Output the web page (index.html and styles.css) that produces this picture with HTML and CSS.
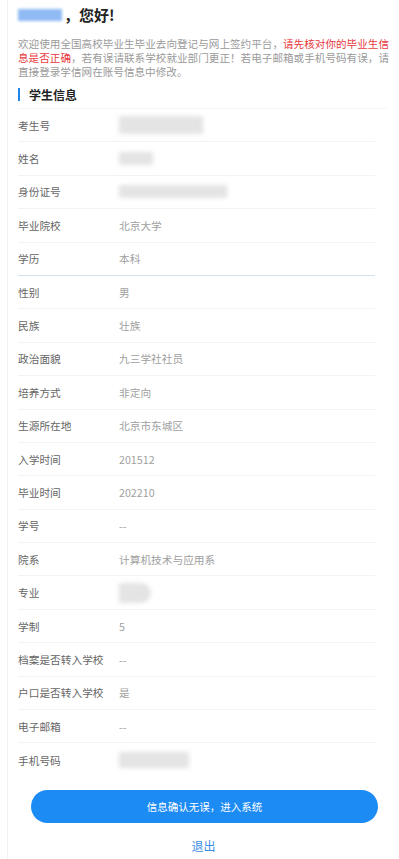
FILE: index.html
```html
<!DOCTYPE html>
<html lang="zh-CN">
<head>
    <meta charset="UTF-8">
    <meta name="viewport" content="width=device-width, initial-scale=1.0">
    <title>学生信息确认</title>
    <link rel="stylesheet" href="styles.css">
</head>
<body>
    <div class="page">
        <h1 class="greeting"><span class="blur-name"></span>，您好!</h1>
        <p class="intro">欢迎使用全国高校毕业生毕业去向登记与网上签约平台，<span class="warn">请先核对你的毕业生信息是否正确</span>，若有误请联系学校就业部门更正！若电子邮箱或手机号码有误，请直接登录学信网在账号信息中修改。</p>

        <h2 class="section-title">学生信息</h2>

        <div class="info-list">
            <div class="row"><span class="label">考生号</span><span class="value"><i class="blur blur-ksh"></i></span></div>
            <div class="row"><span class="label">姓名</span><span class="value"><i class="blur blur-name2"></i></span></div>
            <div class="row"><span class="label">身份证号</span><span class="value"><i class="blur blur-id"></i></span></div>
            <div class="row"><span class="label">毕业院校</span><span class="value">北京大学</span></div>
            <div class="row row-split"><span class="label">学历</span><span class="value">本科</span></div>
            <div class="row"><span class="label">性别</span><span class="value">男</span></div>
            <div class="row"><span class="label">民族</span><span class="value">壮族</span></div>
            <div class="row"><span class="label">政治面貌</span><span class="value">九三学社社员</span></div>
            <div class="row"><span class="label">培养方式</span><span class="value">非定向</span></div>
            <div class="row"><span class="label">生源所在地</span><span class="value">北京市东城区</span></div>
            <div class="row"><span class="label">入学时间</span><span class="value">201512</span></div>
            <div class="row"><span class="label">毕业时间</span><span class="value">202210</span></div>
            <div class="row"><span class="label">学号</span><span class="value">--</span></div>
            <div class="row"><span class="label">院系</span><span class="value">计算机技术与应用系</span></div>
            <div class="row"><span class="label">专业</span><span class="value"><i class="blur blur-major"></i></span></div>
            <div class="row"><span class="label">学制</span><span class="value">5</span></div>
            <div class="row"><span class="label">档案是否转入学校</span><span class="value">--</span></div>
            <div class="row"><span class="label">户口是否转入学校</span><span class="value">是</span></div>
            <div class="row"><span class="label">电子邮箱</span><span class="value">--</span></div>
            <div class="row row-last"><span class="label">手机号码</span><span class="value"><i class="blur blur-phone"></i></span></div>
        </div>

        <button class="confirm-btn" type="button">信息确认无误，进入系统</button>
        <a class="logout" href="#">退出</a>
    </div>
</body>
</html>
```

FILE: styles.css
```css
body {
    margin: 0;
    font-family: "Noto Sans CJK SC", "Noto Sans", sans-serif;
    background-color: #fff;
}

.page {
    margin-left: 7px;
    border-left: 1px solid #f0f0f0;
    padding: 0 10px 0 10px;
    min-height: 859px;
    box-sizing: border-box;
}

.greeting {
    margin: 0;
    padding-top: 4px;
    height: 22px;
    line-height: 22px;
    font-size: 15px;
    font-weight: bold;
    color: #222;
    display: flex;
    align-items: center;
}

.blur-name {
    display: inline-block;
    width: 44px;
    height: 12px;
    background-color: #8fbaf3;
    filter: blur(1.5px);
    margin-right: 2px;
}

.intro {
    margin: 11px 0 0 0;
    font-size: 10.6px;
    line-height: 14px;
    color: #9a9a9a;
    text-align: justify;
}

.warn {
    color: #e8383d;
}

.section-title {
    margin: 9px 0 0 0;
    padding-left: 9px;
    border-left: 2px solid #1f86e8;
    font-size: 12px;
    line-height: 13px;
    font-weight: bold;
    color: #222;
}

.info-list {
    margin-top: 7px;
    border-top: 1px solid #f6f6f6;
    margin-right: 2px;
}

.row {
    display: flex;
    align-items: center;
    height: 33.4px;
    box-sizing: border-box;
    border-bottom: 1px solid #f3f3f3;
    margin-right: 12px;
    font-size: 10.7px;
}

.row-split {
    border-bottom-color: #cfe2ef;
}

.row-last {
    border-bottom: none;
}

.label {
    width: 101px;
    flex-shrink: 0;
    color: #666;
}

.value {
    color: #a0a0a0;
    display: flex;
    align-items: center;
}

.blur {
    display: inline-block;
    background-color: #e4e4e4;
    filter: blur(2px);
}

.blur-ksh { width: 84px; height: 18px; }
.blur-name2 { width: 34px; height: 13px; }
.blur-id { width: 108px; height: 13px; }
.blur-major { width: 32px; height: 20px; border-radius: 0 10px 10px 0; }
.blur-phone { width: 70px; height: 16px; }

.confirm-btn {
    display: block;
    margin: 13px 11px 0 13px;
    width: calc(100% - 24px);
    height: 33px;
    border: none;
    border-radius: 17px;
    background-color: #1d8bf4;
    color: #fff;
    font-family: inherit;
    font-size: 10.5px;
}

.logout {
    display: block;
    margin-top: 14px;
    text-align: center;
    font-size: 12px;
    color: #3b8ee6;
    text-decoration: none;
}
```
